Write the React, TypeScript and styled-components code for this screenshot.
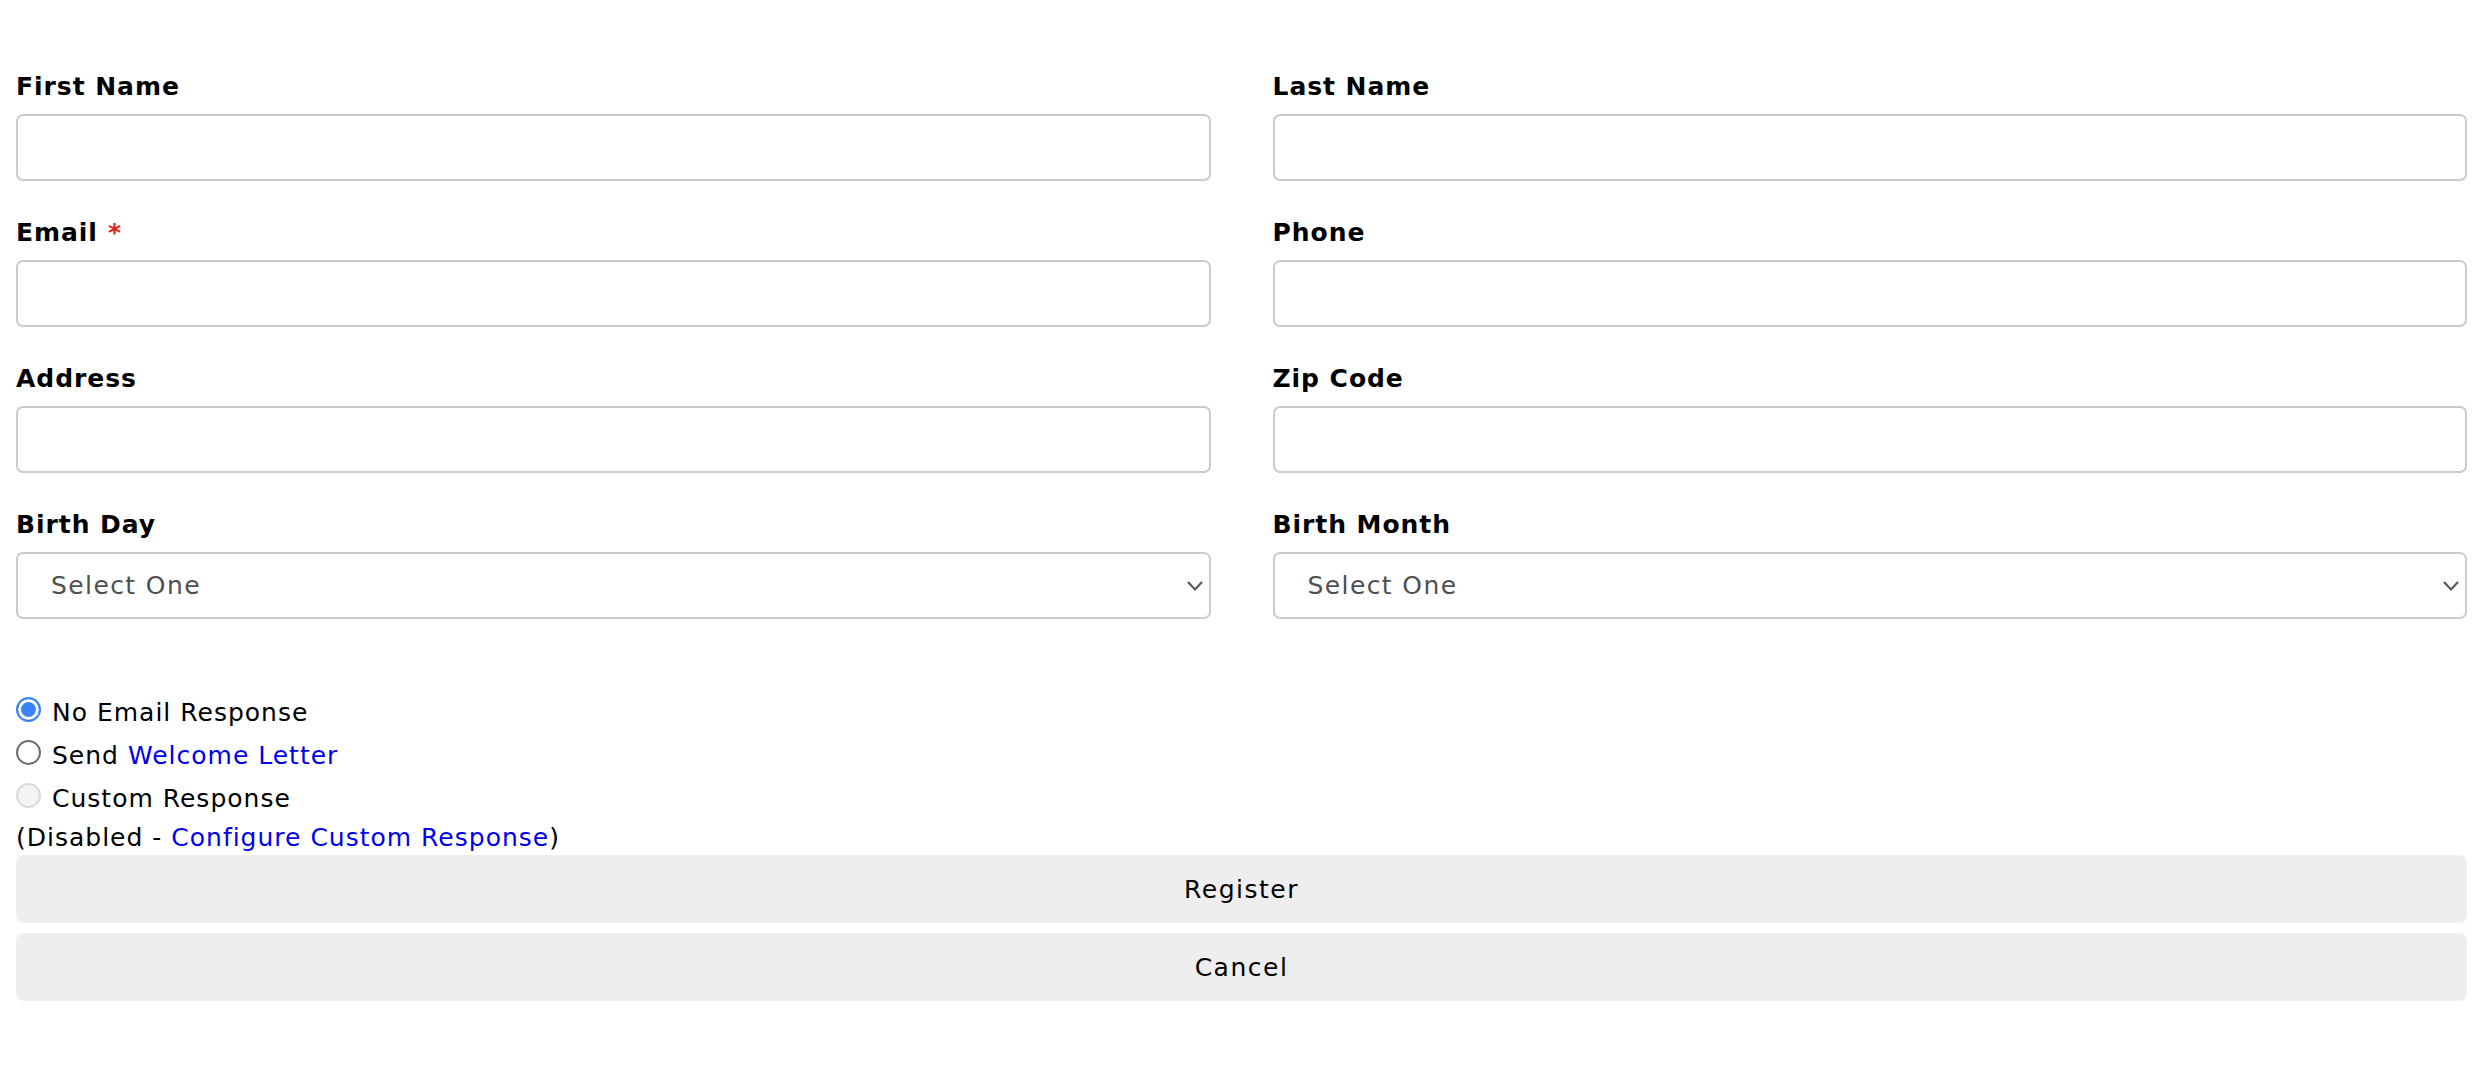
import React from "react";
import styled, { createGlobalStyle } from "styled-components";

const GlobalStyle = createGlobalStyle`
  html, body {
    margin: 0;
    padding: 0;
    background: #ffffff;
  }
  body {
    font-family: "DejaVu Sans", Verdana, sans-serif;
    color: #000000;
  }
  * { box-sizing: border-box; }
`;

const Page = styled.form`
  width: 2490px;
  padding: 72px 23px 60px 16px;
  font-size: 25px;
  letter-spacing: 1px;
`;

const FieldGrid = styled.div`
  display: grid;
  grid-template-columns: 1fr 1fr;
  column-gap: 62px;
`;

const Field = styled.div`
  display: flex;
  flex-direction: column;
  padding-bottom: 37px;
`;

const Label = styled.label`
  font-weight: bold;
  font-size: 25px;
  line-height: 30px;
  margin-bottom: 12px;
  letter-spacing: 0.95px;
`;

const Required = styled.span`
  color: #e0261b;
  margin-left: 10px;
`;

const TextInput = styled.input`
  height: 67px;
  width: 100%;
  border: 2px solid #cbcbcb;
  border-radius: 7px;
  background: #ffffff;
  font-family: inherit;
  font-size: 25px;
  padding: 0 16px;
  outline: none;
`;

const SelectWrap = styled.div`
  position: relative;
  height: 67px;
`;

const Select = styled.select`
  appearance: none;
  -webkit-appearance: none;
  height: 67px;
  width: 100%;
  border: 2px solid #cbcbcb;
  border-radius: 7px;
  background: #ffffff;
  font-family: inherit;
  font-size: 25px;
  letter-spacing: 1.4px;
  color: #4f4f4f;
  padding: 0 60px 0 33px;
  outline: none;
`;

const Chevron = styled.svg`
  position: absolute;
  right: 8px;
  top: 29px;
  width: 16px;
  height: 10px;
  pointer-events: none;
`;

const RadioGroup = styled.div`
  margin-top: 38px;
  display: flex;
  flex-direction: column;
`;

const RadioRow = styled.label`
  display: flex;
  align-items: flex-start;
  height: 43px;
`;

const Radio = styled.input`
  appearance: none;
  -webkit-appearance: none;
  width: 25px;
  height: 25px;
  margin: 3px 11px 0 0;
  border-radius: 50%;
  border: 2px solid #6f6f6f;
  background: #ffffff;
  flex: none;

  &:checked {
    border-color: #3a82f7;
    background: #3a82f7;
    box-shadow: inset 0 0 0 3px #ffffff;
  }

  &:disabled {
    border-color: #dadada;
    background: #f4f4f4;
  }
`;

const RadioText = styled.span`
  line-height: 30px;
  margin-top: 4px;
  font-size: 25px;
`;

const Link = styled.a`
  color: #0000ee;
  text-decoration: none;
`;

const Note = styled.div`
  line-height: 30px;
  font-size: 25px;
`;

const Buttons = styled.div`
  margin-top: 2px;
  display: flex;
  flex-direction: column;
  gap: 10px;
`;

const Button = styled.button`
  height: 68px;
  width: 100%;
  border: none;
  border-radius: 8px;
  background: #eeeeee;
  font-family: inherit;
  font-size: 25px;
  letter-spacing: 1.5px;
  color: #000000;
  cursor: pointer;
`;

type FieldDef = { label: string; required?: boolean };

const textFields: FieldDef[] = [
  { label: "First Name" },
  { label: "Last Name" },
  { label: "Email", required: true },
  { label: "Phone" },
  { label: "Address" },
  { label: "Zip Code" },
];

const ChevronIcon = () => (
  <Chevron viewBox="0 0 16 10">
    <polyline points="1,1 8,8.5 15,1" fill="none" stroke="#555555" strokeWidth="2" />
  </Chevron>
);

export default function App() {
  return (
    <>
      <GlobalStyle />
      <Page onSubmit={(e) => e.preventDefault()}>
        <FieldGrid>
          {textFields.map((f) => (
            <Field key={f.label}>
              <Label>
                {f.label}
                {f.required && <Required>*</Required>}
              </Label>
              <TextInput type="text" />
            </Field>
          ))}
          {["Birth Day", "Birth Month"].map((l) => (
            <Field key={l}>
              <Label>{l}</Label>
              <SelectWrap>
                <Select defaultValue="">
                  <option value="">Select One</option>
                </Select>
                <ChevronIcon />
              </SelectWrap>
            </Field>
          ))}
        </FieldGrid>
        <RadioGroup>
          <RadioRow>
            <Radio type="radio" name="resp" defaultChecked />
            <RadioText>No Email Response</RadioText>
          </RadioRow>
          <RadioRow>
            <Radio type="radio" name="resp" />
            <RadioText>
              Send <Link href="#">Welcome Letter</Link>
            </RadioText>
          </RadioRow>
          <RadioRow>
            <Radio type="radio" name="resp" disabled />
            <RadioText>Custom Response</RadioText>
          </RadioRow>
          <Note>
            (Disabled - <Link href="#">Configure Custom Response</Link>)
          </Note>
        </RadioGroup>
        <Buttons>
          <Button type="button">Register</Button>
          <Button type="button">Cancel</Button>
        </Buttons>
      </Page>
    </>
  );
}
